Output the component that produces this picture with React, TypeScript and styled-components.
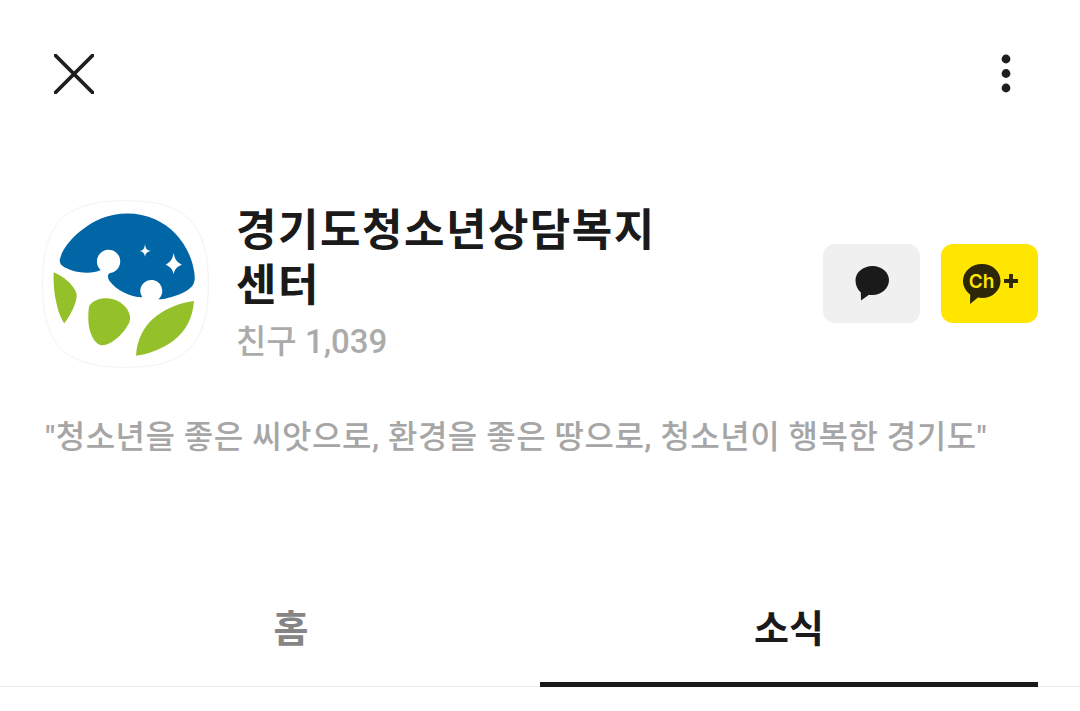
import styled, { createGlobalStyle } from "styled-components";

const GlobalStyle = createGlobalStyle`
  html, body { margin: 0; padding: 0; background: #fff; }
  body { font-family: Roboto, "Noto Sans CJK KR", sans-serif; color: #1a1a1a; }
`;

const CloseIcon = () => (
  <svg width="40" height="40" viewBox="0 0 40 40">
    <path d="M1.5 1.5L38.5 38.5M38.5 1.5L1.5 38.5" stroke="#1e1e1e" strokeWidth="3.8" strokeLinecap="round" />
  </svg>
);

const MoreIcon = () => (
  <svg width="10" height="40" viewBox="0 0 10 40">
    <circle cx="5" cy="5" r="4.4" fill="#1e1e1e" />
    <circle cx="5" cy="19.5" r="4.4" fill="#1e1e1e" />
    <circle cx="5" cy="34" r="4.4" fill="#1e1e1e" />
  </svg>
);

const Logo = () => (
  <svg width="168" height="168" viewBox="36 28 504 504">
    <path
      d="M286 30C470 30 535 100 535 280C535 460 470 530 286 530C100 530 38 460 38 280C38 100 100 30 286 30Z"
      fill="#fff"
      stroke="#f2f2f2"
      strokeWidth="3"
    />
    <path
      d="M90 205C100 160 160 105 215 83C265 63 325 63 375 86C435 113 480 170 492 240C497 270 495 285 470 300C445 315 410 325 385 326A33 33 0 1 0 337 320C300 318 260 300 238 270C232 258 232 252 240 247A35 35 0 1 0 212 238C190 250 150 248 122 238C100 230 86 222 90 205Z"
      fill="#0066a6"
    />
    <path d="M345 160C347 175 350 178 362 181C350 184 347 188 345 198C343 188 340 184 330 181C340 178 343 175 345 160Z" fill="#fff" />
    <path d="M431 186C434 205 440 215 456 222C440 228 434 236 431 250C428 236 421 228 407 222C421 215 428 205 431 186Z" fill="#fff" />
    <path d="M71 245C100 258 130 280 140 310C142 335 120 375 103 398C85 375 68 310 71 245Z" fill="#94c02a" />
    <path d="M178 345C195 320 240 315 270 335C295 352 305 375 298 395C285 425 245 465 215 464C190 460 175 420 175 385C175 370 175 355 178 345Z" fill="#94c02a" />
    <path d="M492 331C488 380 470 420 430 450C395 475 355 490 318 495C320 450 340 405 380 375C415 350 455 335 492 331Z" fill="#94c02a" />
  </svg>
);

const BubbleIcon = () => (
  <svg width="36" height="36" viewBox="0 0 36 36">
    <path
      d="M18.5 1C28 1 35 7.5 35 15C35 23 28 30 18.5 30C17 30 16 29.9 15 29.7L7 35.5L6.8 27.5C3.3 24.5 1.5 20 1.5 15.2C1.5 7.5 9 1 18.5 1Z"
      fill="#1a1a1a"
    />
  </svg>
);

const ChannelIcon = () => (
  <svg width="56" height="42" viewBox="0 -1 56 42">
    <path
      d="M20 1C30.5 1 38.5 8.5 38.5 18C38.5 27.5 30.5 35 20 35C18.5 35 17.5 34.8 16 34.5L8 41L8.2 31.5C3.8 28.2 1 23.5 1 18C1 8.5 9.5 1 20 1Z"
      fill="#2d2708"
    />
    <text x="19.5" y="24.8" textAnchor="middle" fontFamily="Inter, sans-serif" fontWeight="600" fontSize="19" fill="#ffe600">
      Ch
    </text>
    <path d="M49 11V25M42 18H56" stroke="#2d2708" strokeWidth="3.8" />
  </svg>
);

export default function App() {
  return (
    <Page>
      <GlobalStyle />
      <TopBar>
        <CloseIcon />
        <MoreIcon />
      </TopBar>

      <Profile>
        <LogoBox>
          <Logo />
        </LogoBox>
        <Info>
          <Title>경기도청소년상담복지 센터</Title>
          <Friends>친구 1,039</Friends>
        </Info>
        <Actions>
          <ActionButton>
            <BubbleIcon />
          </ActionButton>
          <ActionButton $yellow>
            <ChannelIcon />
          </ActionButton>
        </Actions>
      </Profile>

      <Description>"청소년을 좋은 씨앗으로, 환경을 좋은 땅으로, 청소년이 행복한 경기도"</Description>

      <Tabs>
        <Tab>홈</Tab>
        <Tab $active>소식</Tab>
      </Tabs>
    </Page>
  );
}

const Page = styled.div`
  width: 1080px;
  height: 711px;
  overflow: hidden;
  background: #fff;
`;

const TopBar = styled.div`
  display: flex;
  align-items: center;
  justify-content: space-between;
  padding: 54px 69px 0 54px;
`;

const Profile = styled.div`
  display: flex;
  align-items: center;
  margin-top: 106px;
  padding: 0 42px;
`;

const LogoBox = styled.div`
  width: 168px;
  height: 168px;
  flex-shrink: 0;
  svg { display: block; }
`;

const Info = styled.div`
  width: 430px;
  margin: 2px 0 0 27px;
`;

const Title = styled.div`
  font-size: 44px;
  font-weight: 700;
  line-height: 55px;
  margin-top: -3px;
  margin-left: -1px;
  color: #1a1a1a;
  letter-spacing: 1.5px;
`;

const Friends = styled.div`
  margin-top: 6px;
  margin-left: -1px;
  font-size: 33px;
  font-weight: 500;
  line-height: 44px;
  color: #ababab;
`;

const Actions = styled.div`
  display: flex;
  gap: 21px;
  margin-left: auto;
  margin-top: -2px;
`;

const ActionButton = styled.div<{ $yellow?: boolean }>`
  width: 97px;
  height: 79px;
  border-radius: 12px;
  display: flex;
  align-items: center;
  justify-content: center;
  background: ${(p) => (p.$yellow ? "#ffe600" : "#f0f0f0")};
`;

const Description = styled.div`
  margin-top: 46px;
  padding: 0 45px;
  font-size: 32px;
  font-weight: 500;
  line-height: 46px;
  letter-spacing: 0.49px;
  color: #a6a6a6;
  white-space: nowrap;
`;

const Tabs = styled.div`
  display: flex;
  margin-top: 140px;
  padding: 0 42px;
  border-bottom: 1px solid #ececec;
`;

const Tab = styled.div<{ $active?: boolean }>`
  flex: 1;
  height: 87px;
  box-sizing: border-box;
  padding-top: 3px;
  text-align: center;
  font-size: 38px;
  font-weight: 700;
  line-height: 52px;
  margin-bottom: -1px;
  color: ${(p) => (p.$active ? "#1a1a1a" : "#858585")};
  border-bottom: 5px solid ${(p) => (p.$active ? "#1a1a1a" : "transparent")};
`;
